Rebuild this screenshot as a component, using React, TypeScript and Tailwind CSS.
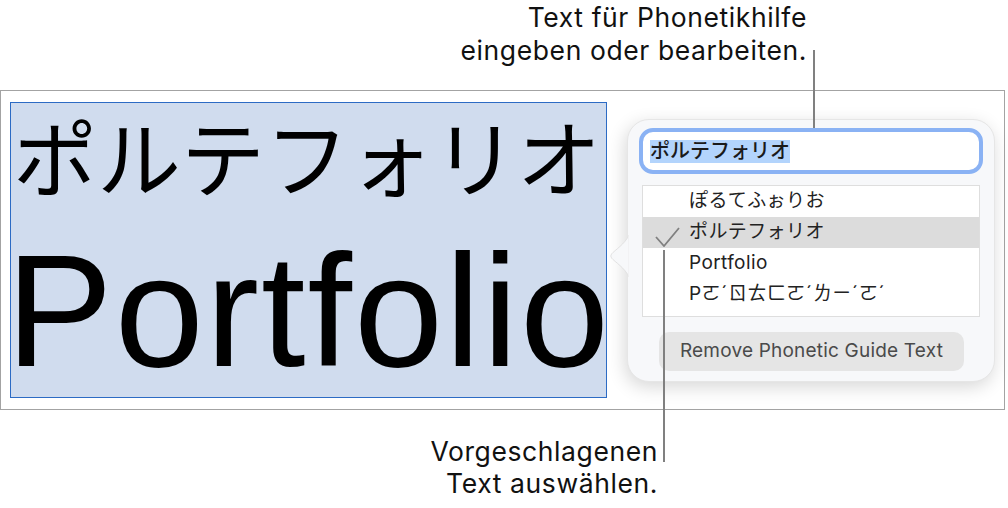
import React from "react"

const rows = [
    { text: "ぽるてふぉりお", selected: false },
    { text: "ポルテフォリオ", selected: true },
    { text: "Portfolio", selected: false },
    { text: "Pㄛˊㄖㄊㄈㄛˊㄌㄧˊㄛˊ", selected: false },
]

function Check() {
    return (
        <svg width="26" height="20" viewBox="0 0 26 20" className="absolute left-[12px] top-[10px]">
            <polyline points="1,10 9,19 24,1" fill="none" stroke="#808080" strokeWidth="1.8" />
        </svg>
    )
}

function Popover() {
    return (
        <div className="absolute left-[627px] top-[119px] w-[368px] h-[263px] rounded-[22px] bg-[#f7f8fa] border border-[#e6e6e6] shadow-[-2px_5px_18px_rgba(0,0,0,0.16)] flex flex-col px-[11px] pt-[8px] font-['Inter','Noto_Sans_CJK_JP',sans-serif]">
            <svg width="20" height="42" viewBox="0 0 20 42" className="absolute left-[-18px] top-[115px]">
                <path d="M19 0 C 15 9, 5 15, 1.5 19 Q 0 21, 1.5 23 C 5 27, 15 33, 19 42 Z" fill="#f7f8fa" stroke="#e2e2e2" strokeWidth="1" />
                <rect x="18.5" y="0" width="2" height="42" fill="#f7f8fa" />
            </svg>

            <div className="h-[46px] rounded-[14px] border-[4px] border-[#8ab2f4] bg-white flex items-center pl-[7px]">
                <span className="bg-[#b3d4fc] text-[20px] leading-[23px] font-medium text-[#1a1a1a]">ポルテフォリオ</span>
            </div>

            <div className="mt-[11px] mx-[3px] h-[132px] border border-[#dedede] bg-white flex flex-col">
                {rows.map((row) => (
                    <div
                        key={row.text}
                        className={`relative h-[31px] flex items-center pl-[46px] text-[19px] tracking-[0.4px] text-[#222] ${row.selected ? "bg-[#dcdcdc]" : ""}`}
                    >
                        {row.selected && <Check />}
                        {row.text}
                    </div>
                ))}
            </div>

            <button className="mt-[15px] ml-[20px] w-[305px] h-[39px] rounded-[10px] bg-[#e5e5e5] text-[19px] tracking-[0.2px] text-[#4a4a4a]">
                Remove Phonetic Guide Text
            </button>
        </div>
    )
}

export default function App() {
    return (
        <div className="relative w-[1008px] h-[508px] overflow-hidden bg-white text-[#111] font-['Inter',sans-serif]">
            <div className="w-[807px] pt-[1px] text-right text-[26.5px] tracking-[0.6px] leading-[33px]">
                <p>Text für Phonetikhilfe</p>
                <p>eingeben oder bearbeiten.</p>
            </div>

            <div className="mt-[23px] w-[1005px] h-[320px] border border-[#a3a3a3] pl-[9px] pt-[11px]">
                <div className="w-[597px] h-[296px] border border-[#2c6bc4] bg-[#d0dcee] text-black">
                    <p className="mt-[10px] pl-[2px] text-[84px] leading-none font-['Noto_Sans_CJK_JP',sans-serif] whitespace-nowrap">
                        ポルテフォリオ
                    </p>
                    <p className="mt-[34px] ml-[-5px] text-[160px] leading-none tracking-[2px] font-['Liberation_Sans',Arial,sans-serif] whitespace-nowrap">
                        Portfolio
                    </p>
                </div>
            </div>

            <div className="mt-[25px] w-[658px] text-right text-[26.5px] tracking-[0.6px] leading-[32px]">
                <p>Vorgeschlagenen</p>
                <p>Text auswählen.</p>
            </div>

            <Popover />

            <div className="absolute left-[813px] top-[50px] w-[2px] h-[78px] bg-[#808080]" />
            <div className="absolute left-[663px] top-[250px] w-[2px] h-[212px] bg-[#808080]" />
        </div>
    )
}
